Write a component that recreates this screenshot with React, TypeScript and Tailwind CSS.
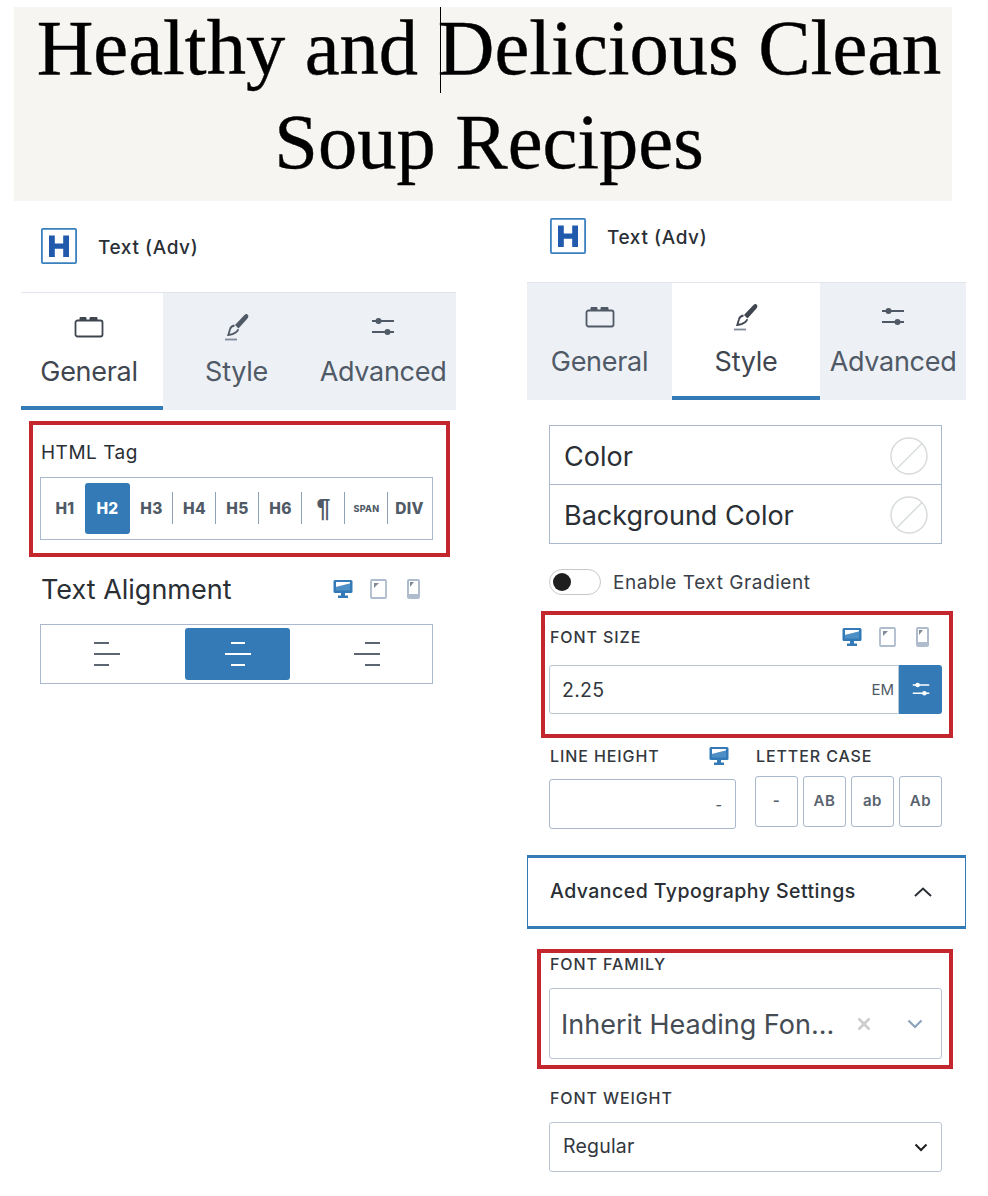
const blue = '#337ab7';

function HBlockIcon() {
  return (
    <svg width="36" height="36" viewBox="0 0 36 36" className="block">
      <rect x="0.900" y="0.900" width="34.200" height="34.200" rx="1" fill="#fff" stroke="#3a80bd" strokeWidth="1.800" />
      <path d="M8 7.500h5.800v8h8.400v-8H28V29h-5.800v-8.300h-8.400V29H8z" fill="#2159ad" />
    </svg>
  );
}

function BlockIcon() {
  return (
    <svg width="30" height="24" viewBox="0 0 30 24" fill="none">
      <rect x="1.500" y="5.500" width="27" height="16" rx="2" stroke="currentColor" strokeWidth="1.800" />
      <path d="M6 5V2.500h6V5M16 5V2.500h7V5" fill="currentColor" stroke="currentColor" strokeWidth="1" />
    </svg>
  );
}

function BrushIcon() {
  return (
    <svg width="26" height="28" viewBox="0 0 26 28" fill="none">
      <path d="M23.500 1.500c-1.500-1-2.500 0-4 1.500L11 12l3.500 3.500 8.500-9.500c1.500-1.700 2-3.300.5-4.500z" fill="currentColor" />
      <path d="M10.500 12.500c-2.500 .5-4 1.800-4.500 3.800L4.300 22c3-.3 5.700-1.200 7.700-2.800 1.300-1 2-2 2.300-3" stroke="currentColor" strokeWidth="1.800" />
      <path d="M1 26.500h12" stroke="#7f8b99" strokeWidth="1.800" />
    </svg>
  );
}

function SlidersIcon({ width = 24, height = 22 }: { width?: number; height?: number }) {
  return (
    <svg width={width} height={height} viewBox="0 0 24 22" fill="none">
      <path d="M1 5h22M1 16h22" stroke="currentColor" strokeWidth="1.800" />
      <circle cx="7.500" cy="5" r="3" fill="currentColor" />
      <circle cx="16.500" cy="16" r="3" fill="currentColor" />
    </svg>
  );
}

function DesktopIcon() {
  return (
    <svg width="20" height="20" viewBox="0 0 20 20" className="block">
      <rect x="0.500" y="1" width="19" height="13" rx="1.500" fill={blue} />
      <path d="M3 3h14v1.500L3 8z" fill="#fff" />
      <path d="M3 8l14-3.500V11.500H3z" fill="#6aa5d6" opacity="0.5" />
      <path d="M8 14h4v2.500h3V19H5v-2.500h3z" fill={blue} />
    </svg>
  );
}

function TabletIcon() {
  return (
    <svg width="17" height="20" viewBox="0 0 17 20" className="block">
      <rect x="1" y="1" width="15" height="18" rx="1" fill="#fff" stroke="#aebccd" strokeWidth="1.800" />
      <path d="M4 4h5L4 9z" fill="#7f8b99" />
    </svg>
  );
}

function PhoneIcon() {
  return (
    <svg width="13" height="20" viewBox="0 0 13 20" className="block">
      <rect x="0" y="0" width="13" height="20" rx="2" fill="#aebccd" />
      <rect x="2" y="2" width="9" height="13" fill="#fff" />
      <path d="M3 3h4L3 8z" fill="#7f8b99" />
    </svg>
  );
}

function DeviceIcons() {
  return (
    <div className="flex items-center gap-[17px]">
      <DesktopIcon />
      <TabletIcon />
      <div className="ml-[3px]">
        <PhoneIcon />
      </div>
    </div>
  );
}

function NoColor() {
  return (
    <svg width="38" height="38" viewBox="0 0 38 38" fill="none">
      <circle cx="19" cy="19" r="18" stroke="#d9dcdc" strokeWidth="1.500" />
      <path d="M6.500 32L32 6.500" stroke="#d9dcdc" strokeWidth="1.500" />
    </svg>
  );
}

function AlignIcon({ kind, color }: { kind: 'left' | 'center' | 'right'; color: string }) {
  const short = kind === 'left' ? 'M0 1h15M0 23h15' : kind === 'center' ? 'M6 1h14M6 23h14' : 'M11 1h15M11 23h15';
  return (
    <svg width="26" height="24" viewBox="0 0 26 24" fill="none">
      <path d={`${short}M0 12h26`} stroke={color} strokeWidth="2" />
    </svg>
  );
}

const tabs = [
  { label: 'General', icon: <BlockIcon /> },
  { label: 'Style', icon: <BrushIcon /> },
  { label: 'Advanced', icon: <SlidersIcon /> },
];

function Tabs({ active, widths }: { active: number; widths: string[] }) {
  return (
    <div className="flex h-[118px] border-t border-[#dfe5ea]">
      {tabs.map((tab, i) => (
        <div
          key={tab.label}
          className={`flex flex-col items-center pt-[19px] ${widths[i]} ${
            i === active ? 'border-b-4 border-[#337ab7] bg-white text-[#3f4650]' : 'bg-[#edf0f5] text-[#505a66]'
          }`}
        >
          <div className="flex h-[30px] items-center justify-center">{tab.icon}</div>
          <span className="mt-[12px] text-[27px] leading-[36px] tracking-[-0.3px]">{tab.label}</span>
        </div>
      ))}
    </div>
  );
}

function Header() {
  return (
    <div className="flex items-center">
      <HBlockIcon />
      <span className="ml-[21px] pt-[4px] text-[19px] font-medium tracking-[0.6px] text-[#2a2f35]">Text (Adv)</span>
    </div>
  );
}

const tagButtons = ['H1', 'H2', 'H3', 'H4', 'H5', 'H6', '¶', 'SPAN', 'DIV'];

function Label({ children }: { children: string }) {
  return <div className="pl-[1px] text-[16px] font-medium leading-[18px] tracking-[0.9px] text-[#33383e]">{children}</div>;
}

function LeftPanel() {
  return (
    <div className="ml-[21px] mt-[27px] w-[435px]">
      <div className="ml-[20px]">
        <Header />
      </div>
      <div className="mt-[28px]">
        <Tabs active={0} widths={['w-[142px] pr-[6px]', 'w-[147px]', 'w-[146px]']} />
      </div>

      <div className="ml-[8px] mt-[11px] h-[136px] w-[421px] border-4 border-[#c4262e] pl-[7px] pt-[16px]">
        <div className="pl-[1px] text-[19px] leading-[24px] tracking-[0.5px] text-[#2a2f35]">HTML Tag</div>
        <div className="mt-[12px] flex h-[63px] w-[393px] items-center border border-[#a9b8cc] pl-[1px]">
          {tagButtons.map((tag, i) => (
            <div
              key={tag}
              className={`flex h-[51px] items-center justify-center font-extrabold ${
                tag === 'H2' ? 'w-[45px] rounded-[3px] bg-[#337ab7] text-white' : 'w-[43px] text-[#505a66]'
              } ${i === 0 ? 'pl-[3px]' : ''} ${i >= 2 && i < 8 ? 'relative' : ''} ${
                tag === 'SPAN'
                  ? 'text-[9px] tracking-[0.3px]'
                  : tag === '¶'
                    ? "font-['Liberation_Sans',sans-serif] text-[25px]"
                    : 'text-[15.5px] tracking-[0.3px]'
              }`}
            >
              {tag}
              {i >= 2 && i < 8 && <span className="absolute right-0 top-[9px] h-[32px] w-px bg-[#8fa1b5]" />}
            </div>
          ))}
        </div>
      </div>

      <div className="ml-[19px] mt-[16px] flex h-[34px] w-[380px] items-center justify-between">
        <span className="pl-[1px] text-[27px] leading-[34px] text-[#2a2f35]">Text Alignment</span>
        <div className="mb-[3px]">
          <DeviceIcons />
        </div>
      </div>

      <div className="ml-[19px] mt-[17px] flex h-[60px] w-[393px] items-center border border-[#a9b8cc] px-[3px]">
        <div className="flex w-[141px] items-center justify-center pr-[15px]">
          <AlignIcon kind="left" color="#5b6672" />
        </div>
        <div className="flex h-[52px] w-[105px] items-center justify-center rounded-[3px] bg-[#337ab7]">
          <AlignIcon kind="center" color="#ffffff" />
        </div>
        <div className="flex flex-1 items-center justify-center pl-[15px]">
          <AlignIcon kind="right" color="#5b6672" />
        </div>
      </div>
    </div>
  );
}

function ColorRow({ label, first }: { label: string; first?: boolean }) {
  return (
    <div className={`flex items-center justify-between pl-[14px] pr-[13px] ${first ? 'h-[59px] border-b border-[#a9b8cc]' : 'h-[58px]'}`}>
      <span className="pt-[4px] text-[27px] leading-[36px] text-[#2a2f35]">{label}</span>
      <div className="pt-[2px]">
        <NoColor />
      </div>
    </div>
  );
}

function CaseButton({ label }: { label: string }) {
  return (
    <div className="flex h-[51px] w-[43px] items-center justify-center rounded-[3px] border border-[#a9b8cc] text-[15px] font-semibold tracking-[0.5px] text-[#59636e]">
      {label}
    </div>
  );
}

function RightPanel() {
  return (
    <div className="ml-[71px] mt-[17px] w-[439px]">
      <div className="ml-[23px]">
        <Header />
      </div>
      <div className="mt-[28px]">
        <Tabs active={1} widths={['w-[145px]', 'w-[148px]', 'w-[146px]']} />
      </div>

      <div className="ml-[22px] mt-[25px] w-[393px] border border-[#a9b8cc]">
        <ColorRow label="Color" first />
        <ColorRow label="Background Color" />
      </div>

      <div className="ml-[22px] mt-[25px] flex h-[26px] items-center">
        <div className="flex h-[26px] w-[52px] items-center rounded-full border border-[#c5c9cd] pl-[3px]">
          <div className="h-[18px] w-[18px] rounded-full bg-[#1e1e1e]" />
        </div>
        <span className="ml-[12px] pt-[2px] text-[19px] tracking-[0.55px] text-[#3a4048]">Enable Text Gradient</span>
      </div>

      <div className="ml-[14px] mt-[16px] h-[127px] w-[412px] border-4 border-[#c4262e] pl-[4px] pt-[12px]">
        <div className="flex h-[20px] w-[380px] items-center justify-between">
          <Label>FONT SIZE</Label>
          <DeviceIcons />
        </div>
        <div className="mt-[18px] flex h-[49px] w-[393px]">
          <div className="flex flex-1 items-center justify-between rounded-l-[3px] border border-[#b9c5d3] pl-[12px] pr-[4px]">
            <span className="pt-[2px] text-[19.5px] tracking-[0.3px] text-[#33383e]">2.25</span>
            <span className="mt-[2px] text-[15px] text-[#505a66]">EM</span>
          </div>
          <div className="flex w-[43px] items-center justify-center rounded-r-[3px] bg-[#337ab7] text-white">
            <SlidersIcon width={18} height={17} />
          </div>
        </div>
      </div>

      <div className="ml-[22px] mt-[8px] flex">
        <div className="w-[187px]">
          <div className="flex h-[20px] items-center justify-between">
            <Label>LINE HEIGHT</Label>
            <div className="mr-[7px]">
              <DesktopIcon />
            </div>
          </div>
          <div className="mt-[13px] flex h-[50px] items-center justify-end rounded-[3px] border border-[#a9b8cc] pr-[13px] text-[14px] font-medium text-[#505a66]">
            -
          </div>
        </div>
        <div className="ml-[19px]">
          <div className="flex h-[20px] items-center">
            <Label>LETTER CASE</Label>
          </div>
          <div className="mt-[10px] flex gap-[5px]">
            <CaseButton label="-" />
            <CaseButton label="AB" />
            <CaseButton label="ab" />
            <CaseButton label="Ab" />
          </div>
        </div>
      </div>

      <div className="mt-[26px] flex h-[74px] items-center justify-between border-x border-b-[3px] border-t-[3px] border-[#337ab7] pl-[22px] pr-[33px]">
        <span className="text-[19.5px] font-medium tracking-[0.46px] text-[#2a2f35]">Advanced Typography Settings</span>
        <svg width="18" height="10" viewBox="0 0 18 10" fill="none">
          <path d="M1 9l8-7.500L17 9" stroke="#2a2f35" strokeWidth="2" />
        </svg>
      </div>

      <div className="ml-[10px] mt-[20px] h-[120px] w-[416px] border-4 border-[#c4262e] pl-[8px] pt-[1px]">
        <div className="flex h-[20px] items-center">
          <Label>FONT FAMILY</Label>
        </div>
        <div className="mt-[14px] flex h-[71px] w-[393px] items-center rounded-[3px] border border-[#b9c5d3] pl-[11px] pr-[18px]">
          <span className="flex-1 pt-[3px] text-[27px] text-[#454c54]">Inherit Heading Fon...</span>
          <svg width="14" height="14" viewBox="0 0 14 14" fill="none">
            <path d="M1.500 1.500l11 11M12.500 1.500l-11 11" stroke="#cccccc" strokeWidth="2.500" />
          </svg>
          <svg width="16" height="10" viewBox="0 0 16 10" fill="none" className="ml-[36px]">
            <path d="M1.500 1.500L8 8l6.500-6.500" stroke="#8ba2bd" strokeWidth="2.200" />
          </svg>
        </div>
      </div>

      <div className="ml-[22px] mt-[19px] flex h-[20px] items-center">
        <Label>FONT WEIGHT</Label>
      </div>
      <div className="ml-[22px] mt-[14px] flex h-[50px] w-[393px] items-center justify-between rounded-[3px] border border-[#b9c5d3] pl-[13px] pr-[13px]">
        <span className="text-[19.5px] tracking-[0.2px] text-[#33383e]">Regular</span>
        <svg width="14" height="9" viewBox="0 0 14 9" fill="none">
          <path d="M1.500 1.500L7 7l5.500-5.500" stroke="#1e1e1e" strokeWidth="2" />
        </svg>
      </div>
    </div>
  );
}

export default function App() {
  return (
    <div className="min-h-[1196px] w-[988px] overflow-hidden bg-white font-['Inter',sans-serif]">
      <div className="pt-[7px]">
        <h2 className="relative ml-[14px] flow-root h-[194px] w-[938px] bg-[#f6f5f2] pl-[12px] text-center font-['Liberation_Serif',serif] text-[78.5px] leading-[94px] text-black [-webkit-text-stroke:0.4px_black]">
          <div className="-mt-[6px]">
            Healthy and Delicious Clean
            <br />
            Soup Recipes
          </div>
          <span className="absolute left-[426px] top-0 h-[86px] w-px bg-black" />
        </h2>
      </div>
      <div className="flex items-start">
        <LeftPanel />
        <RightPanel />
      </div>
    </div>
  );
}
